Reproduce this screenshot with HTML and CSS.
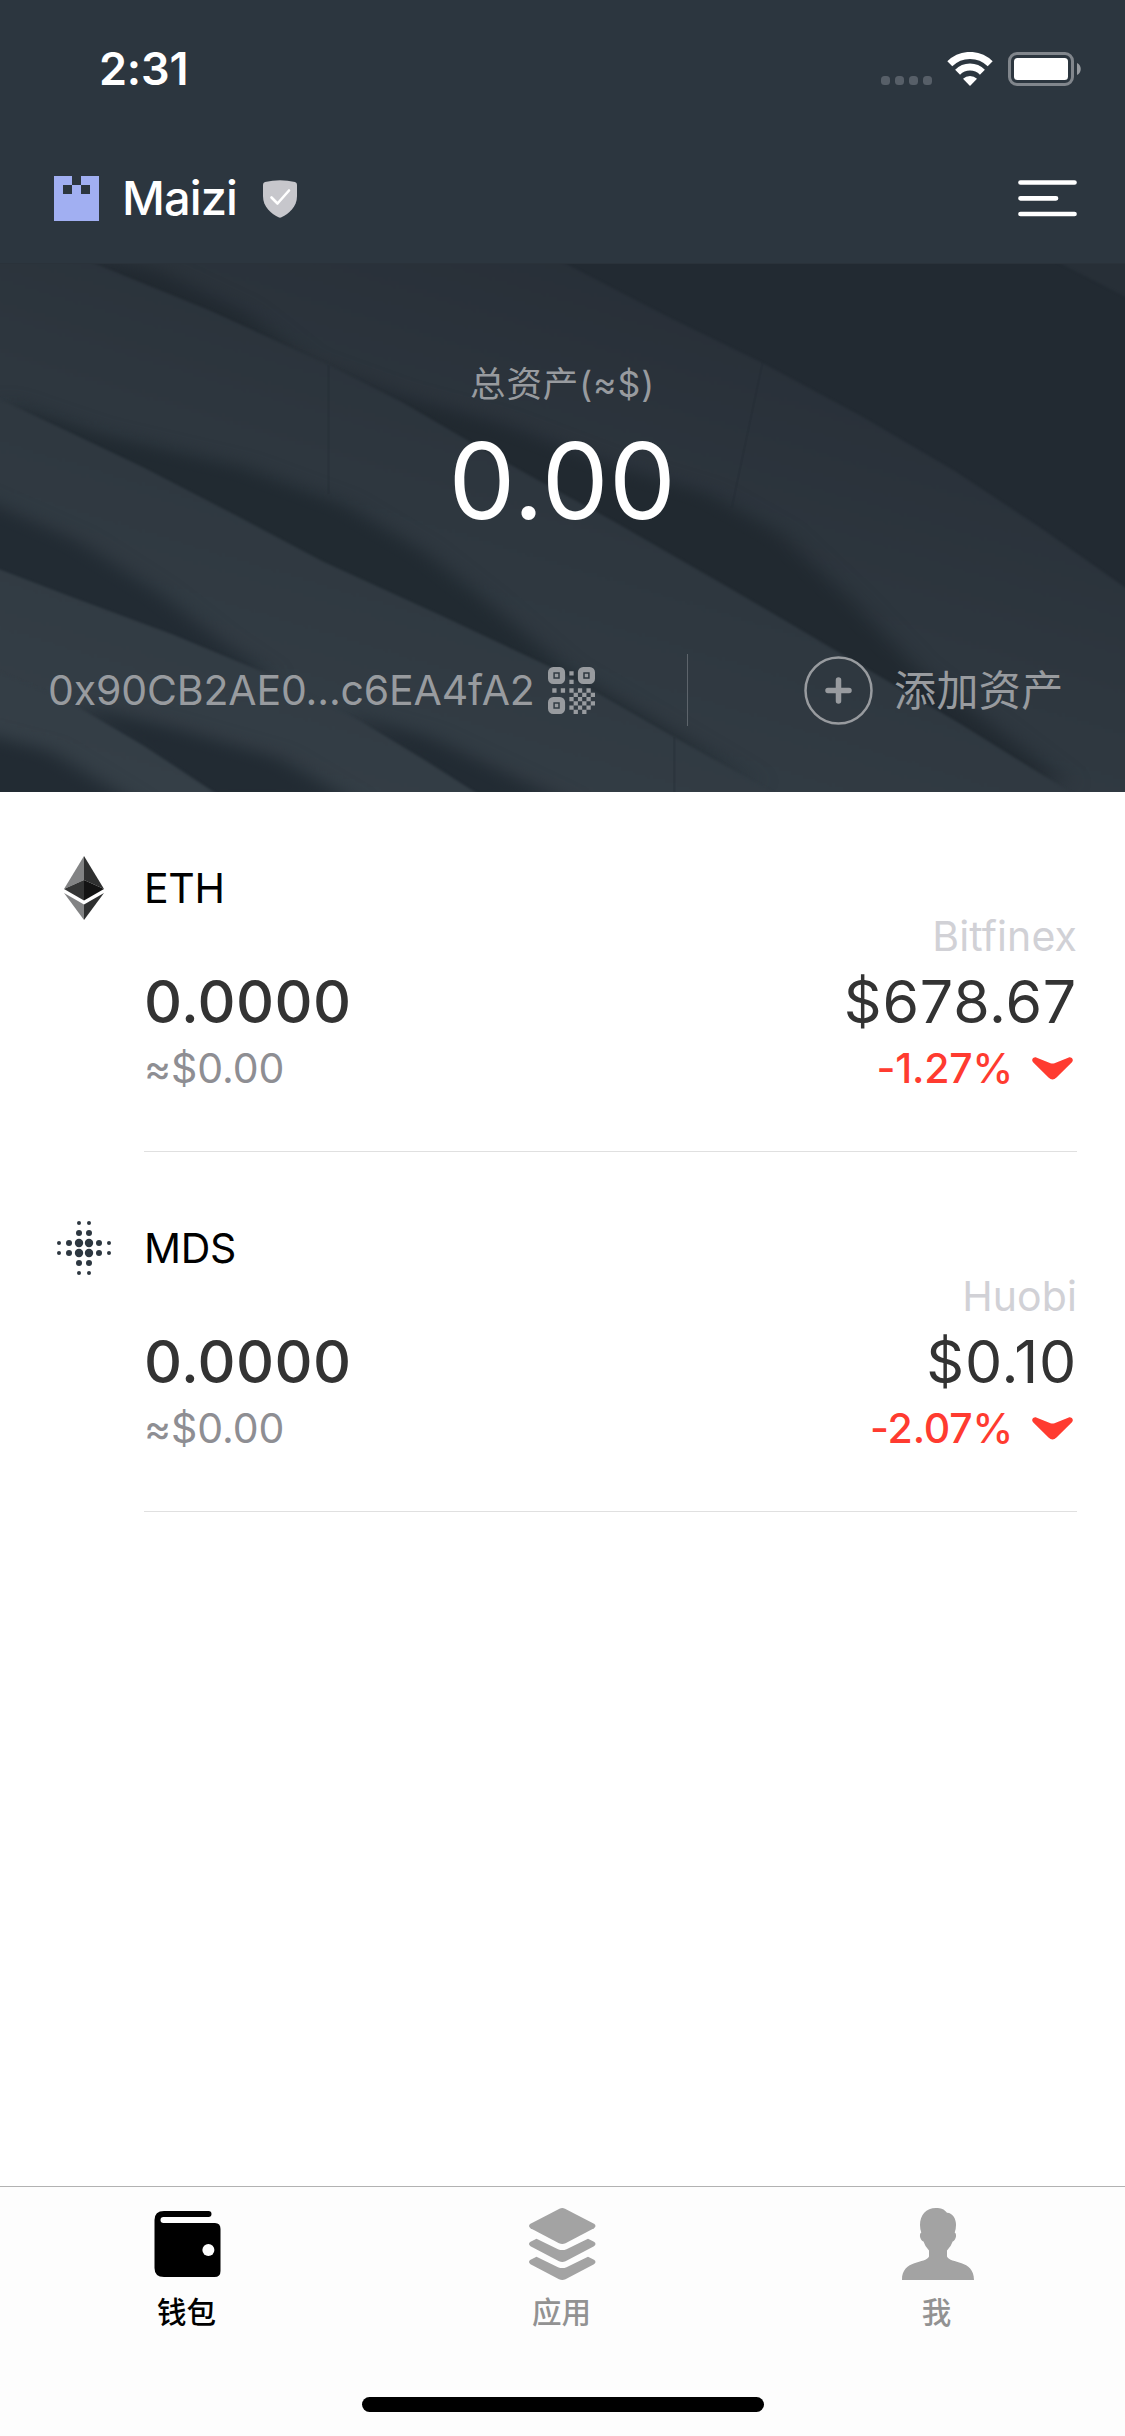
FILE: index.html
```html
<!DOCTYPE html>
<html lang="zh-CN">
<head>
<meta charset="utf-8">
<title>Maizi</title>
<link rel="stylesheet" href="styles.css">
</head>
<body>
<div class="screen">
  <header class="top">
    <div class="status">
      <span class="time">2:31</span>
      <div class="status-icons">
        <div class="signal"><i></i><i></i><i></i><i></i></div>
        <svg class="wifi" viewBox="0 0 46 34"><g fill="none" stroke="#fff"><path d="M2.800 11.800a28.500 28.500 0 0 1 40.400 0" stroke-width="7"/><path d="M10.600 20.200a17.600 17.600 0 0 1 24.800 0" stroke-width="7"/></g><path d="M16 26.800a10 10 0 0 1 14 0L23 34z" fill="#fff"/></svg>
        <svg class="battery" viewBox="0 0 73 34"><rect x="1.500" y="1.500" width="63" height="31" rx="7.500" fill="none" stroke="#81868c" stroke-width="3"/><rect x="6" y="6" width="54" height="22" rx="3.500" fill="#fff"/><path d="M69 11c5 2 5 10 0 12z" fill="#969a9f"/></svg>
      </div>
    </div>
    <div class="nav">
      <svg class="avatar" viewBox="0 0 5 5" shape-rendering="crispEdges"><path fill="#a1aff2" d="M0 0h2v1h1V0h2v5H0zM1 1v1h1V1zM3 1v1h1V1z" fill-rule="evenodd"/></svg>
      <span class="name">Maizi</span>
      <svg class="shield" viewBox="0 0 34 38"><path d="M0 4.500Q0 2.500 2 2Q17-1.500 32 2Q34 2.500 34 4.500V16C34 27 26 33.500 18.500 37.300Q17 38 15.500 37.300C8 33.500 0 27 0 16z" fill="#c7c7cc"/><path d="M8.500 17.500l6 6L26 10.500" fill="none" stroke="#fff" stroke-width="2.600" stroke-linecap="round" stroke-linejoin="round"/></svg>
      <svg class="menu" viewBox="0 0 59 37"><path d="M2.500 2.500h54M2.500 18.300h35.500M2.500 34h54" stroke="#fff" stroke-width="4.700" stroke-linecap="round"/></svg>
    </div>
  </header>

  <section class="hero">
    <svg class="hero-bg" viewBox="0 0 1568 1562" preserveAspectRatio="none">
      <defs>
        <linearGradient id="blade" gradientUnits="userSpaceOnUse" x1="200" y1="1562" x2="1200" y2="0"><stop offset="0" stop-color="#353f47"/><stop offset=".5" stop-color="#2e373f"/><stop offset="1" stop-color="#262d36"/></linearGradient>
        <filter id="soft" color-interpolation-filters="sRGB" x="-20%" y="-20%" width="140%" height="140%"><feGaussianBlur stdDeviation="16 22"/></filter>
        <filter id="edge" color-interpolation-filters="sRGB" x="-5%" y="-5%" width="110%" height="110%"><feGaussianBlur stdDeviation="2.500"/></filter>
      </defs>
      <rect width="1568" height="1562" fill="#222a32"/>
      <path d="M1470-10L1580 110V-10z" fill="#272f37" filter="url(#edge)"/>
      <path d="M780-10L930 155L1060 290L1200 450L1330 612L1450 780L1590 990V1600H-30V-30z" fill="url(#blade)" filter="url(#edge)"/>
      <path d="M100-30L220 20L340 140L430 290L560 390L700 470L850 590L990 680L1090 800L1190 1000L1280 1200L1490 1540L1300 1480L900 1000L500 500L200 150z" fill="#212930" filter="url(#soft)"/>
      <path d="M110-20L290 135L460 300L560 408L650 520L750 640L850 755L1010 950L1170 1150L1340 1362L1520 1600H-30V-30z" fill="url(#blade)" filter="url(#edge)"/>
      <path d="M0 400L140 500L340 600L480 710L590 850L680 1000L790 1200L1060 1540L800 1320L400 900L50 500z" fill="#212a31" filter="url(#soft)"/>
      <path d="M-30 370L90 490L200 602L330 745L450 880L620 1045L780 1205L940 1400L1100 1590H-30z" fill="url(#blade)" filter="url(#edge)"/>
      <path d="M-40 680L110 820L220 970L310 1120L380 1220L300 1220L-40 950z" fill="#222b33" filter="url(#soft)"/>
      <path d="M480 1330L600 1400L800 1600H640z" fill="#222b33" filter="url(#soft)"/>
      <path d="M-30 880L100 985L240 1095L370 1210L500 1350L590 1465L690 1600H-30z" fill="url(#blade)" filter="url(#edge)"/>
      <path d="M100 1300L240 1370L390 1460L500 1600H280z" fill="#222b33" filter="url(#soft)"/>
      <path d="M-30 1180L100 1300L200 1425L325 1600H-30z" fill="url(#blade)" filter="url(#edge)"/>
      <path d="M-40 1380L70 1440L200 1610H-40z" fill="#222b33" filter="url(#soft)"/>
      <path d="M458 300V680M1063 290L1020 720M940 1400V1562" fill="none" stroke="#222b33" stroke-opacity=".35" stroke-width="3"/>
    </svg>
    <div class="total-label">总资产(≈$)</div>
    <div class="total">0.00</div>
    <div class="actions">
      <div class="address"><span class="address-text">0x90CB2AE0...c6EA4fA2</span>
        <svg class="qr" viewBox="0 0 11 11"><g fill="none" stroke="#989b9f" stroke-width="1.250"><rect x=".625" y=".625" width="2.750" height="2.750" rx=".6"/><rect x="7.625" y=".625" width="2.750" height="2.750" rx=".6"/><rect x=".625" y="7.625" width="2.750" height="2.750" rx=".6"/></g><path fill="#989b9f" d="M1.600 1.600h.8v.8h-.8zM8.600 1.600h.8v.8h-.8zM1.600 8.600h.8v.8h-.8zM5 1h1v1H5zM5 3h1v1H5zM1 5h1v1H1zM3 5h1v1H3zM5 5h1v1H5zM7 5h1v1H7zM9 5h1v1H9zM6 6h1v1H6zM8 6h1v1H8zM10 6h1v1h-1zM5 7h1v1H5zM7 7h1v1H7zM9 7h1v1H9zM6 8h1v1H6zM8 8h1v1H8zM10 8h1v1h-1zM5 9h1v1H5zM7 9h1v1H7zM9 9h1v1H9zM6 10h1v1H6zM8 10h1v1H8z"/></svg>
      </div>
      <div class="add">
        <svg class="plus" viewBox="0 0 69 69"><circle cx="34.500" cy="34.500" r="33" fill="none" stroke="#989b9f" stroke-width="2.500"/><path d="M24 34.500h21M34.500 24v21" stroke="#989b9f" stroke-width="5.500" stroke-linecap="round"/></svg>
        <span class="add-text">添加资产</span>
      </div>
    </div>
  </section>

  <main class="assets">
    <article class="asset">
      <div class="asset-icon"><svg class="eth" viewBox="0 0 40 64"><path d="M20 0L0 33l20-9z" fill="#828384"/><path d="M20 0l20 33-20-9z" fill="#2f3030"/><path d="M0 33l20-9v20.500z" fill="#343535"/><path d="M40 33l-20-9v20.500z" fill="#131313"/><path d="M0 37l20 11.500V64z" fill="#828384"/><path d="M40 37L20 48.500V64z" fill="#2f3030"/></svg></div>
      <div class="asset-body">
        <div class="holding">
          <div class="symbol">ETH</div>
          <div class="amount">0.0000</div>
          <div class="value">≈$0.00</div>
        </div>
        <div class="quote">
          <div class="exchange">Bitfinex</div>
          <div class="price">$678.67</div>
          <div class="change"><span>-1.27%</span><svg class="down" viewBox="0 0 41 23"><path d="M4.200.4L18.500 6.200Q20.500 7 22.500 6.200L36.800.4C40 0 42.300 3 39.700 5.400L24.500 20.400Q20.500 24.500 16.500 20.400L1.300 5.400C-1.300 3 1 0 4.200.4z" fill="#ff3b30"/></svg></div>
        </div>
      </div>
    </article>
    <article class="asset">
      <div class="asset-icon"><svg class="mds" viewBox="0 0 54 54" fill="#2d3740"><g id="arms"><circle cx="22" cy="2" r="2"/><circle cx="32" cy="2" r="2"/><circle cx="22" cy="12" r="3"/><circle cx="32" cy="12" r="3"/><circle cx="22" cy="22" r="4.200"/><circle cx="32" cy="22" r="4.200"/><circle cx="2" cy="22" r="2"/><circle cx="12" cy="22" r="3"/><circle cx="42" cy="22" r="3"/><circle cx="52" cy="22" r="2"/></g><use href="#arms" transform="matrix(1 0 0 -1 0 54)"/></svg></div>
      <div class="asset-body">
        <div class="holding">
          <div class="symbol">MDS</div>
          <div class="amount">0.0000</div>
          <div class="value">≈$0.00</div>
        </div>
        <div class="quote">
          <div class="exchange">Huobi</div>
          <div class="price">$0.10</div>
          <div class="change"><span>-2.07%</span><svg class="down" viewBox="0 0 41 23"><path d="M4.200.4L18.500 6.200Q20.500 7 22.500 6.200L36.800.4C40 0 42.300 3 39.700 5.400L24.500 20.400Q20.500 24.500 16.500 20.400L1.300 5.400C-1.300 3 1 0 4.200.4z" fill="#ff3b30"/></svg></div>
        </div>
      </div>
    </article>
  </main>

  <footer class="bottom">
    <nav class="tabs">
      <div class="tab active">
        <svg viewBox="0 0 72 72"><path d="M12 3H56.500a3 3 0 0 1 0 6H11.500a3 3 0 0 0 0 6H63Q68.500 15 68.500 21V63Q68.500 69 62.500 69H12Q2.500 69 2.500 60V12Q2.500 3 12 3z" fill="#000"/><circle cx="56.400" cy="42" r="6" fill="#fdfdfd"/></svg>
        <span>钱包</span>
      </div>
      <div class="tab">
        <svg viewBox="0 0 72 72" fill="#a3a3a3"><path d="M32.500.7Q35.300-.7 38 .7L67 15.800Q70 18 67 20.200L38.500 35.300Q35.300 36.700 32 35.300L3.500 20.200Q.5 18 3.500 15.800z"/><path id="chev" d="M9.500 30.800L31 41.200Q35.300 43 39.500 41.200L61 30.800L67 33.800Q70 36 67 38.200L38.500 53.300Q35.300 54.700 32 53.300L3.500 38.200Q.5 36 3.500 33.800z"/><use href="#chev" y="18"/></svg>
        <span>应用</span>
      </div>
      <div class="tab">
        <svg viewBox="0 0 72 72"><path d="M34 0C39 0 42 1 45 4.700C51 5 54 11 54 17Q54 21 52.700 24.500C55.500 26 53.500 33 50.700 33.500Q49 38.500 45 42.500V48.500C48 56 72 51 72 72H0C0 51 24 56 27 48.500V42.500Q23 38.500 21.500 33.500C18.500 33 16.500 26 19.300 24.500Q18 21 18 17C18 7 24 0 34 0z" fill="#a3a3a3"/></svg>
        <span>我</span>
      </div>
    </nav>
    <div class="home-indicator"></div>
  </footer>
</div>
</body>
</html>
```

FILE: styles.css
```css
* { box-sizing: border-box; }
body {
  margin: 0;
  background: #fff;
  font-family: Inter, "Noto Sans CJK SC", sans-serif;
}
svg { display: block; flex: none; }
.screen {
  width: 1125px;
  height: 2436px;
  display: flex;
  flex-direction: column;
  overflow: hidden;
}

/* Status bar and navigation */
.top { height: 264px; background: #2c363f; color: #fff; flex: none; border-bottom: 1px solid #2a323a; }
.status {
  height: 132px;
  padding: 6px 44px 0 99px;
  display: flex;
  align-items: center;
  justify-content: space-between;
}
.time { font-size: 45px; line-height: 60px; font-weight: 600; letter-spacing: -0.2px; }
.status-icons { display: flex; align-items: center; }
.signal { display: flex; gap: 5px; padding-top: 23px; margin-right: 15px; }
.signal i { width: 9px; height: 9px; border-radius: 3.5px; background: #575f68; }
.wifi { width: 46px; height: 34px; margin-right: 15px; }
.battery { width: 73px; height: 34px; }
.nav { height: 132px; padding: 0 48px 0 54px; display: flex; align-items: center; }
.avatar { width: 45px; height: 45px; }
.name { font-size: 47px; line-height: 60px; font-weight: 500; letter-spacing: -0.9px; margin-left: 23px; width: 116px; }
.shield { width: 34px; height: 38px; margin-left: 25px; margin-top: 2px; }
.menu { width: 59px; height: 37px; margin-left: auto; }

/* Balance panel */
.hero {
  position: relative;
  height: 528px;
  flex: none;
  padding-top: 96px;
  color: #989b9f;
  display: flex;
  flex-direction: column;
  align-items: center;
  isolation: isolate;
}
.hero-bg { position: absolute; inset: 0; width: 100%; height: 100%; z-index: -1; }
.total-label { font-size: 35.5px; line-height: 50px; height: 50px; letter-spacing: 0.9px; }
.total { font-size: 106px; line-height: 100px; margin-top: 21px; letter-spacing: 0.5px; color: #fff; }
.actions { width: 100%; height: 72px; margin-top: 123px; display: flex; }
.address { width: 688px; padding-left: 48px; border-right: 1px solid #5d646b; display: flex; align-items: center; }
.address-text { font-size: 41px; line-height: 60px; letter-spacing: -0.15px; width: 500px; white-space: nowrap; }
.qr { width: 47px; height: 47px; }
.add { padding-left: 116px; display: flex; align-items: center; }
.plus { width: 69px; height: 69px; }
.add-text { font-size: 42px; line-height: 60px; height: 60px; letter-spacing: 0.4px; margin: 2px 0 0 21px; }

/* Asset list */
.assets { flex: 1; background: #fff; }
.asset { height: 360px; display: flex; }
.asset-icon { width: 144px; height: 60px; margin-top: 66px; padding-left: 24px; display: flex; align-items: center; justify-content: center; }
.eth { width: 40px; height: 64px; }
.mds { width: 54px; height: 54px; }
.asset-body {
  flex: 1;
  margin-right: 48px;
  border-bottom: 1px solid #e0e0e0;
  display: flex;
  justify-content: space-between;
}
.holding { padding-top: 66px; }
.quote { padding-top: 119px; display: flex; flex-direction: column; align-items: flex-end; }
.symbol { font-size: 41px; line-height: 60px; margin-bottom: 49px; letter-spacing: -0.3px; color: #000; }
.amount { font-size: 59px; line-height: 70px; font-weight: 500; letter-spacing: 0.4px; color: #333; }
.value { font-size: 41px; line-height: 50px; margin-top: 6px; letter-spacing: -0.1px; color: #8e8e93; }
.exchange { font-size: 41px; line-height: 50px; letter-spacing: 0.1px; color: #d1d1d6; }
.price { font-size: 59px; line-height: 70px; margin-top: 6px; letter-spacing: 0.8px; color: #333; }
.change { font-size: 41px; line-height: 50px; margin-top: 6px; font-weight: 500; letter-spacing: -0.2px; color: #ff3b30; display: flex; align-items: center; }
.down { width: 41px; height: 23px; margin: 0 4px 0 19px; }

/* Tab bar */
.bottom { height: 250px; flex: none; background: #fdfdfd; border-top: 1px solid #b2b2b2; }
.tabs { display: flex; padding-top: 21px; height: 210px; }
.tab { flex: 1; display: flex; flex-direction: column; align-items: center; color: #929292; }
.tab svg { width: 72px; height: 72px; }
.tab span { font-size: 29.5px; line-height: 36px; height: 36px; margin: 14px 2px 0 0; font-weight: 500; }
.tab.active { color: #000; }
.home-indicator { width: 402px; height: 15px; border-radius: 8px; background: #000; margin: 0 auto; }
```
